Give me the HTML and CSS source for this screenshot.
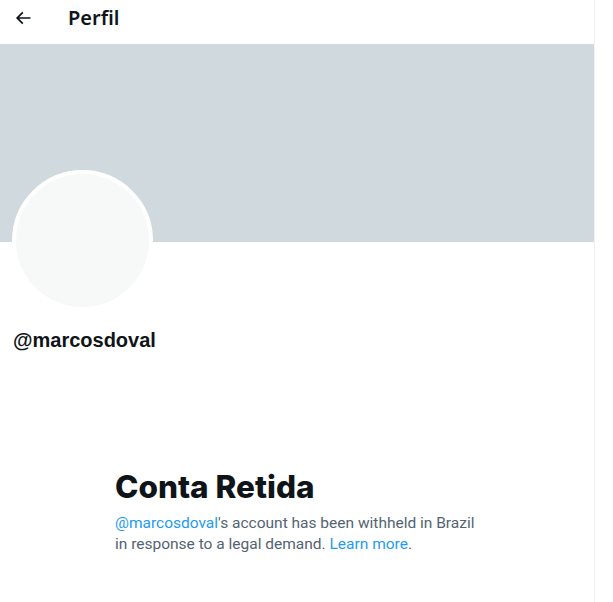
FILE: index.html
```html
<!DOCTYPE html>
<html lang="pt">
<head>
    <meta charset="UTF-8">
    <meta name="viewport" content="width=device-width, initial-scale=1.0">
    <title>Perfil</title>
    <link rel="stylesheet" href="styles.css">
</head>
<body>
    <div class="page">
        <main class="column">
            <header class="topbar">
                <button class="back" aria-label="Voltar">
                    <svg viewBox="0 0 24 24" width="20" height="20">
                        <path d="M7.414 13l5.043 5.04-1.414 1.42L3.586 12l7.457-7.46 1.414 1.42L7.414 11H21v2H7.414z"></path>
                    </svg>
                </button>
                <h2 class="title">Perfil</h2>
            </header>

            <div class="banner"></div>

            <div class="profile">
                <div class="avatar"></div>
                <div class="handle">@marcosdoval</div>
            </div>

            <section class="withheld">
                <h1>Conta Retida</h1>
                <p><a href="#">@marcosdoval</a>'s account has been withheld in Brazil in response to a legal demand. <a href="#">Learn more</a>.</p>
            </section>
        </main>
    </div>
</body>
</html>
```

FILE: styles.css
```css
body {
    margin: 0;
    font-family: "Noto Sans", "Liberation Sans", Arial, sans-serif;
    color: #0f1419;
    background-color: #ffffff;
}
.page {
    display: flex;
    min-height: 602px;
}
.column {
    width: 594px;
    border-right: 1px solid #eff3f4;
    min-height: 602px;
    box-sizing: content-box;
}
.topbar {
    display: flex;
    align-items: center;
    height: 44px;
    padding: 0 12px 0 12px;
    box-sizing: border-box;
}
.back {
    width: 20px;
    height: 20px;
    margin-left: 1px;
    padding: 0;
    border: none;
    background: none;
    display: flex;
    align-items: center;
    justify-content: center;
    margin-top: -8px;
}
.back svg {
    fill: #0f1419;
}
.title {
    margin: -8px 0 0 35px;
    font-size: 20px;
    font-weight: 600;
    line-height: 24px;
}
.banner {
    height: 198px;
    background-color: #cfd9de;
}
.profile {
    padding: 0 16px 0 12px;
    height: 164px;
}
.avatar {
    width: 133px;
    height: 133px;
    border-radius: 50%;
    border: 4px solid #ffffff;
    background-color: #f7f9f9;
    margin-top: -72px;
}
.handle {
    margin-top: 17px;
    font-family: "Liberation Sans", Arial, sans-serif;
    font-weight: bold;
    font-size: 20px;
    line-height: 24px;
    margin-left: 1px;
}
.withheld {
    width: 364px;
    margin: 0 auto;
    padding-top: 135px;
}
.withheld h1 {
    margin: 0 0 8px 0;
    font-family: "Inter", "Liberation Sans", sans-serif;
    font-size: 31.5px;
    font-weight: 800;
    line-height: 36px;
}
.withheld p {
    margin: 0;
    font-family: Roboto, "Liberation Sans", Arial, sans-serif;
    font-size: 15.5px;
    line-height: 21px;
    color: #536471;
}
.withheld a {
    color: #1d9bf0;
    text-decoration: none;
}
```
